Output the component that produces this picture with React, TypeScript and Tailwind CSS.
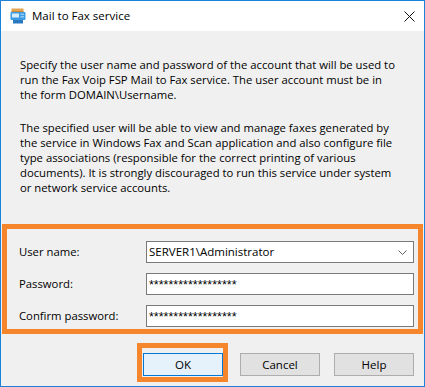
import React from 'react'

const FaxIcon = () => (
  <svg width="16" height="16" viewBox="0 0 16 16" className="shrink-0">
    <rect x="1.5" y="0.5" width="12" height="3.5" fill="#e4a455" />
    <rect x="1.5" y="3" width="12" height="1" fill="#c98a3e" />
    <rect x="0.5" y="4" width="15" height="8" rx="1" fill="#3c9be2" />
    <rect x="2" y="5.5" width="7" height="4" fill="#d6ecfb" />
    <rect x="10.5" y="5.5" width="3.5" height="1.5" fill="#8fcaf4" />
    <rect x="10.5" y="8" width="3.5" height="1.5" fill="#8fcaf4" />
    <rect x="3" y="12" width="10" height="3.5" fill="#2a78bf" />
  </svg>
)

const CloseIcon = () => (
  <svg width="11" height="11" viewBox="0 0 11 11" className="shrink-0">
    <path d="M0.5 0.5 L10.5 10.5 M10.5 0.5 L0.5 10.5" stroke="#111" strokeWidth="1" />
  </svg>
)

const Chevron = () => (
  <svg width="9" height="5" viewBox="0 0 9 5">
    <path d="M0.5 0.5 L4.5 4.5 L8.5 0.5" stroke="#606060" strokeWidth="1" fill="none" />
  </svg>
)

const fields = [
  { label: 'User name:', value: 'SERVER1\\Administrator', combo: true },
  { label: 'Password:', value: '******************', combo: false },
  { label: 'Confirm password:', value: '******************', combo: false },
]

export default function App() {
  return (
    <div
      className="w-[425px] h-[387px] border border-[#1a82d8] bg-[#f0f0f0] flex flex-col text-black"
      style={{ fontFamily: '"Open Sans", "Noto Sans", sans-serif' }}
    >
      {/* barra de título */}
      <div className="h-[30px] shrink-0 bg-white flex items-center pl-[9px] pr-[9px]">
        <FaxIcon />
        <span className="ml-[6px] text-[11.5px]">Mail to Fax service</span>
        <div className="ml-auto">
          <CloseIcon />
        </div>
      </div>

      <div className="flex-1 flex flex-col">
        <div className="pl-[19px] pt-[26px] text-[11.3px] leading-[15px] whitespace-nowrap">
          <p>
            Specify the user name and password of the account that will be used to
            <br />
            run the Fax Voip FSP Mail to Fax service. The user account must be in
            <br />
            the form DOMAIN\Username.
          </p>
          <p className="mt-[18px]">
            The specified user will be able to view and manage faxes generated by
            <br />
            the service in Windows Fax and Scan application and also configure file
            <br />
            type associations (responsible for the correct printing of various
            <br />
            documents). It is strongly discouraged to run this service under system
            <br />
            or network service accounts.
          </p>
        </div>

        {/* grupo resaltado */}
        <div className="mt-[29px] mx-px border-[5px] border-[#f5862c] pl-[12px] pt-[12px] pb-[2px] flex flex-col gap-[10px]">
          {fields.map((f) => (
            <div key={f.label} className="flex items-center">
              <span className="w-[127px] text-[11.3px]">{f.label}</span>
              <div className="w-[268px] h-[22px] bg-white border border-[#7a7a7a] flex items-center pl-[2px] pr-[6px]">
                {f.combo ? (
                  <span className="text-[11.5px]">{f.value}</span>
                ) : (
                  <span
                    className="text-[12.5px] leading-none pt-[2px]"
                    style={{ fontFamily: '"Liberation Sans", sans-serif' }}
                  >
                    {f.value}
                  </span>
                )}
                {f.combo && (
                  <div className="ml-auto">
                    <Chevron />
                  </div>
                )}
              </div>
            </div>
          ))}
        </div>

        {/* botones */}
        <div className="flex justify-end items-start pt-[9px] pr-[10px] text-[11.5px]">
          <div className="border-[5px] border-[#f5862c] pt-[5px] pl-px pb-px">
            <button className="w-[80px] h-[23px] bg-[#e5f1fb] border border-[#0078d7]">OK</button>
          </div>
          <button className="ml-[12px] mt-[10px] w-[80px] h-[23px] bg-[#e1e1e1] border border-[#adadad]">
            Cancel
          </button>
          <button className="ml-[14px] mt-[10px] w-[80px] h-[23px] bg-[#e1e1e1] border border-[#adadad]">
            Help
          </button>
        </div>
      </div>
    </div>
  )
}
